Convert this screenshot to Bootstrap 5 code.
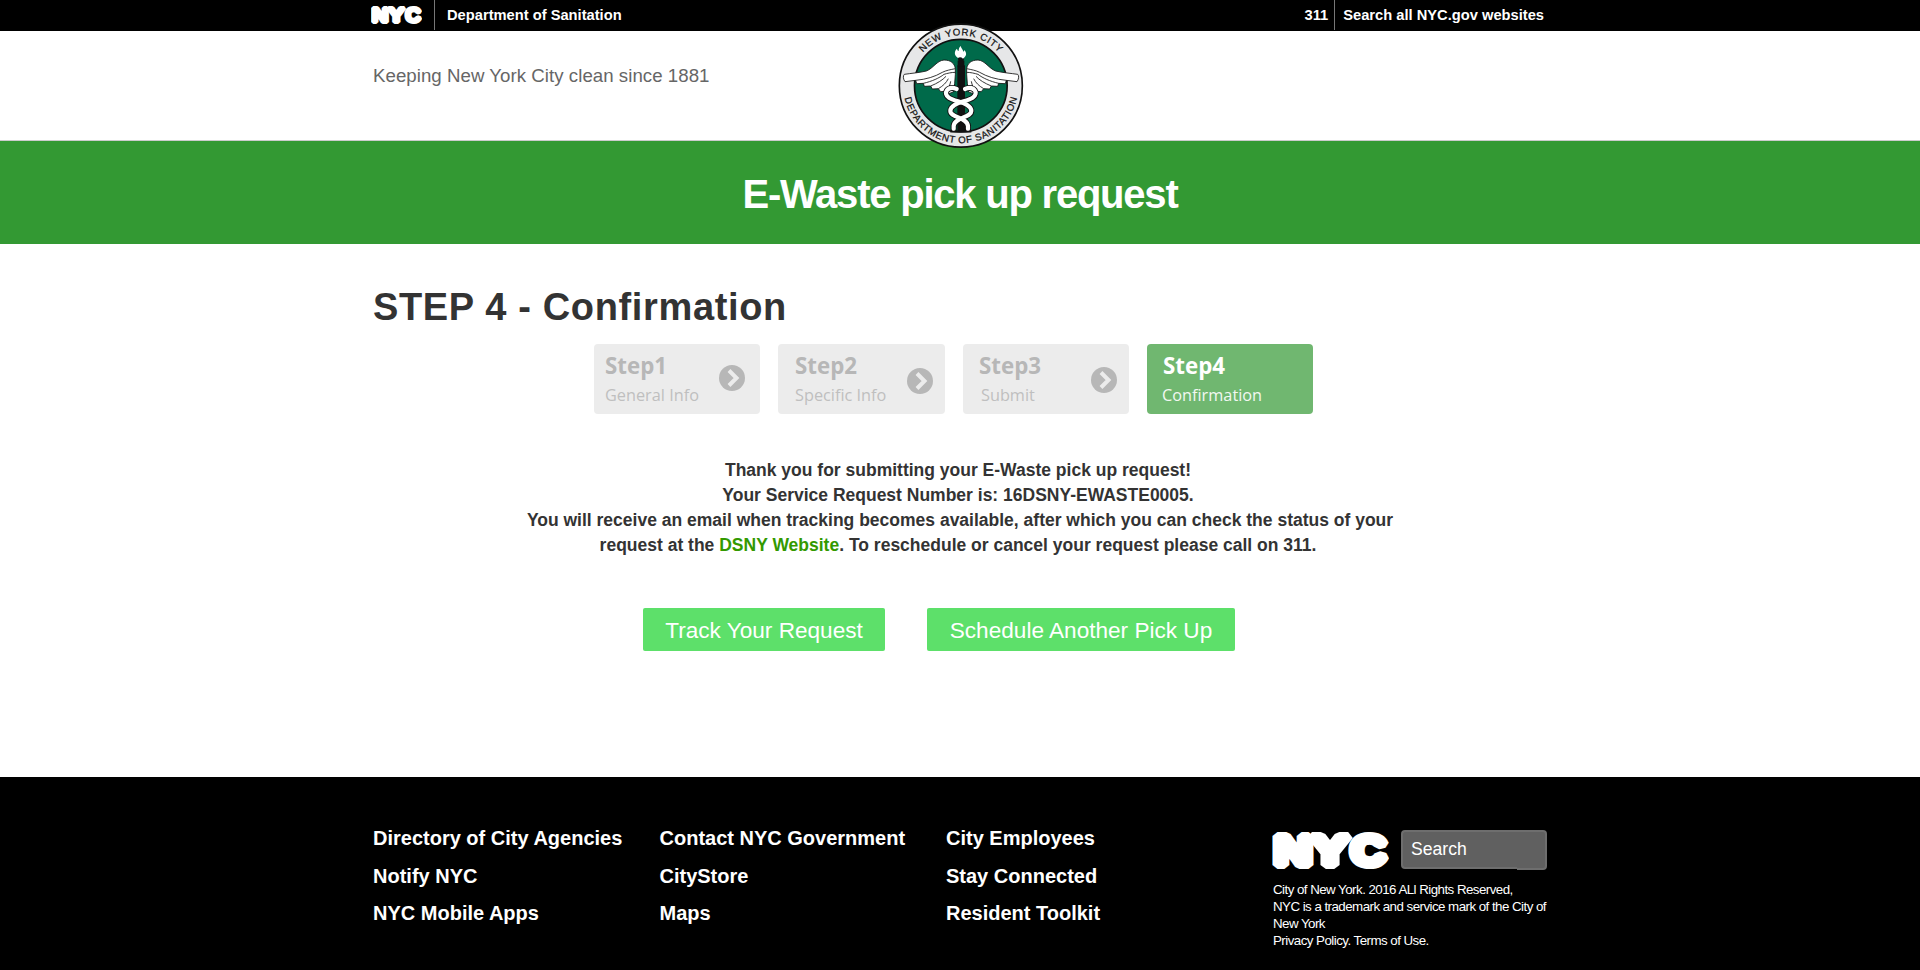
<!DOCTYPE html>
<html lang="en">
<head>
<meta charset="utf-8">
<title>E-Waste pick up request</title>
<link href="https://cdn.jsdelivr.net/npm/bootstrap@5.3.0/dist/css/bootstrap.min.css" rel="stylesheet">
<style>
body{font-family:"Liberation Sans",Arial,sans-serif;color:#333;background:#fff}
a{text-decoration:none}
.wrap{width:1174px;margin:0 auto}
.topbar{height:31px;background:#000;font-size:14.7px;font-weight:700;line-height:30px}
.topbar a{color:#fff}
.topbar .sep{width:1px;height:30px;background:#777}
.topbar .wrap{padding-right:3px}
.logo-sm{width:51px;height:20px;margin:5px 12px 0 -2px}
.dept{margin-left:12px}
.topbar .sep-search{margin:0 8px 0 6px}
.masthead{height:110px;border-bottom:1px solid #ccc;position:relative}
.tagline{font-size:18.67px;line-height:27px;padding-top:31px;color:#666;letter-spacing:.04px}
.seal{position:absolute;left:50%;top:-9px;margin-left:-63.3px;width:128px;height:128px;z-index:2}
.banner{height:103px;background:#339933;padding-top:2px}
.banner h1{font-size:40px;font-weight:700;line-height:103px;letter-spacing:-1.22px;color:#fff}
.step-title{font-size:38px;font-weight:700;line-height:40px;margin-top:43px;height:57px;letter-spacing:.64px}
.steps{gap:18px;padding-left:221px;height:70px;font-family:"Open Sans",sans-serif}
.step{width:166px;height:70px;border-radius:4px;background:#ececec;color:#b7b7b7}
.step b{font-size:22.3px;line-height:30px;padding-top:7px;display:block}
.step span{font-size:16.3px;line-height:22px;display:block;margin-top:3px;color:#bfbfbf}
.step svg{width:26px;height:26px;margin-left:auto}
.step-1{padding-left:11px}.step-1 svg{margin:21px 15px 0 auto}
.step-2{padding-left:17px;width:167px}.step-2 svg{margin:24px 12px 0 auto}
.step-3{padding-left:16px}.step-3 svg{margin:23px 12px 0 auto}
.step-3 span{padding-left:2px}
.step-4{padding-left:15px;background:#70b770;color:#fff}
.step-4 b{padding-left:1px}
.step-4 span{color:#f2f8f2}
.message{font-size:17.5px;font-weight:700;line-height:25px;margin-top:44px}
.message a{color:#390}
.message span{margin-right:4px}
.actions{gap:42px;padding-left:270px;margin-top:50px;height:43px}
.actions .btn{height:43px;border:0;border-radius:2px;background:#5de06a;color:#fff;font-size:22.6px;line-height:42px;padding:2px 0 0}
.btn-track{width:242px}.btn-again{width:308px}
.footer-area{margin-top:126px;height:193px;background:#000;color:#fff;padding-top:43px}
.footer-area a{color:#fff}
.link-col{width:286.5px;font-size:20px;font-weight:700;line-height:37.5px}
.link-col a{display:block;white-space:nowrap}
.brand-col{width:274px;margin-left:40.5px;padding-top:10px}
.logo-lg{width:117px;height:40px;margin:0 12px 0 -1px}
.search-box{width:116px;height:39px;border:2px solid #6e6e6e;border-right:0;border-radius:4px 0 0 4px;background:#606060;color:#fff;font-size:17.6px;line-height:35px;padding:0 0 0 8px}
.search-go{width:30px;height:40px;border:2px solid #6e6e6e;border-left:0;border-radius:0 4px 4px 0;background:#606060}
.legal{font-size:13.33px;line-height:17px;letter-spacing:-.54px;margin-top:11px;white-space:nowrap}
</style>
</head>
<body>
<svg width="0" height="0" class="d-none">
 <symbol id="chev" viewBox="0 0 26 26"><circle cx="13" cy="13" r="13" fill="#b7b7b7"/><path d="M10 5.500 17.500 13 10 20.500" fill="none" stroke="#ececec" stroke-width="4"/></symbol>
 <symbol id="nyc" viewBox="0 0 117 40" preserveAspectRatio="none"><g font-family="Liberation Sans" font-size="42" font-weight="700" fill="#fff" stroke="#fff" stroke-width="8" stroke-linejoin="bevel"><text x="2" y="34.500" textLength="38" lengthAdjust="spacingAndGlyphs">N</text><text x="39" y="34.500" textLength="38" lengthAdjust="spacingAndGlyphs">Y</text><text x="79" y="34.500" textLength="35" lengthAdjust="spacingAndGlyphs">C</text></g></symbol>
</svg>
<header>
 <div class="topbar"><div class="wrap d-flex">
  <svg class="logo-sm"><use href="#nyc" width="51" height="20"/></svg>
  <span class="sep"></span>
  <a href="#" class="dept">Department of Sanitation</a>
  <a href="#" class="ms-auto">311</a><span class="sep sep-search"></span>
  <a href="#">Search all NYC.gov websites</a>
 </div></div>
 <div class="masthead"><div class="wrap tagline">Keeping New York City clean since 1881</div>
  <svg class="seal" viewBox="50 36 384 384">
   <circle cx="241.500" cy="227" r="184.500" fill="#e6e7e8" stroke="#111" stroke-width="5"/>
   <circle cx="241.500" cy="227" r="139" fill="#006a4a" stroke="#111" stroke-width="5"/>
   <path id="arcT" d="M90.500 227a151 151 0 0 1 302 0" fill="none"/>
   <path id="arcB" d="M68.500 227a173 173 0 0 0 346 0" fill="none"/>
   <g font-size="29" fill="#111" stroke="#111" stroke-width=".7" text-anchor="middle">
    <text textLength="258"><textPath href="#arcT" startOffset="50%" textLength="258">NEW YORK CITY</textPath></text>
    <text textLength="468"><textPath href="#arcB" startOffset="50%" textLength="468">DEPARTMENT OF SANITATION</textPath></text>
   </g>
   <path d="M231 166h23v198h-23z" fill="#111"/>
   <circle cx="242" cy="147" r="9" fill="#111"/><path d="M232 152h20v18h-20z" fill="#111"/>
   <path d="M233 144c-14-10-10-22-3-28 1 5 3 6 5 7 0-7 2-11 6-15 2 9 7 10 8 17 2-1 3-3 3-5 9 11 6 19-4 26-5-5-11-5-15-2z" fill="#fff"/>
   <g id="wing" stroke="#111" stroke-width="2.500" stroke-linejoin="round">
    <path fill="#fff" d="M225 176c-2-16-14-26-34-26-22 2-32 25-53 33-20 5-46 7-66 10-5 4-3 16 2 22l32-4 3 10 20-1 3 9 19-1 5 9 18-1 7 9 16-1 8 7 14-5 4-26 2-26z"/>
    <path fill="none" d="M106 211c32-3 58-11 80-24M129 220c26-6 48-16 62-27M151 228c20-8 36-18 46-29M174 236c14-8 24-18 30-30M197 244c8-9 12-19 14-30M186 187c12-6 24-8 39-11M191 193c10-3 22-6 34-6"/>
   </g>
   <use href="#wing" transform="translate(484 0) scale(-1 1)"/>
   <g fill="none">
    <path id="snake" d="M229 237C202 226 186 250 206 263C226 276 272 278 273 303C273 323 222 322 220 348L220 364" stroke="#111" stroke-width="18"/>
    <use href="#snake" transform="translate(483 0) scale(-1 1)"/>
    <path id="body" stroke="#fff" stroke-width="12.500" stroke-linecap="round" d="M229 237C202 226 186 250 206 263C226 276 272 278 273 303C273 323 222 322 220 348L220 357"/>
    <use href="#body" transform="translate(483 0) scale(-1 1)"/>
   </g>
   <path d="M210 365h63" stroke="#111" stroke-width="5"/>
  </svg></div>
 <div class="banner text-center"><h1 class="m-0">E-Waste pick up request</h1></div>
</header>
<main>
 <div class="wrap">
  <h2 class="step-title mb-0">STEP 4 - Confirmation</h2>
  <div class="steps d-flex">
   <div class="step step-1 d-flex"><div><b>Step1</b><span>General Info</span></div><svg><use href="#chev"/></svg></div>
   <div class="step step-2 d-flex"><div><b>Step2</b><span>Specific Info</span></div><svg><use href="#chev"/></svg></div>
   <div class="step step-3 d-flex"><div><b>Step3</b><span>Submit</span></div><svg><use href="#chev"/></svg></div>
   <div class="step step-4"><b>Step4</b><span>Confirmation</span></div>
  </div>
  <div class="message text-center"><span>Thank you for submitting your E-Waste pick up request!</span><br><span>Your Service Request Number is: 16DSNY-EWASTE0005.</span><br>You will receive an email when tracking becomes available, after which you can check the status of your<br><span>request at the <a href="#">DSNY Website</a>. To reschedule or cancel your request please call on 311.</span></div>
  <div class="actions d-flex"><button class="btn btn-track">Track Your Request</button><button class="btn btn-again">Schedule Another Pick Up</button></div>
 </div>
</main>
<footer class="footer-area"><div class="wrap d-flex">
 <nav class="link-col"><a href="#">Directory of City Agencies</a><a href="#">Notify NYC</a><a href="#">NYC Mobile Apps</a></nav>
 <nav class="link-col"><a href="#">Contact NYC Government</a><a href="#">CityStore</a><a href="#">Maps</a></nav>
 <nav class="link-col"><a href="#">City Employees</a><a href="#">Stay Connected</a><a href="#">Resident Toolkit</a></nav>
 <div class="brand-col"><div class="d-flex">
  <svg class="logo-lg"><use href="#nyc" width="117" height="40"/></svg>
  <div class="search-box">Search</div><div class="search-go"></div></div>
  <div class="legal">City of New York. 2016 ALl Rights Reserved,<br>NYC is a trademark and service mark of the City of<br>New York<br><a href="#">Privacy Policy.</a> <a href="#">Terms of Use.</a></div>
 </div>
</div></footer>
<script src="https://cdn.jsdelivr.net/npm/bootstrap@5.3.0/dist/js/bootstrap.bundle.min.js"></script>
</body>
</html>
